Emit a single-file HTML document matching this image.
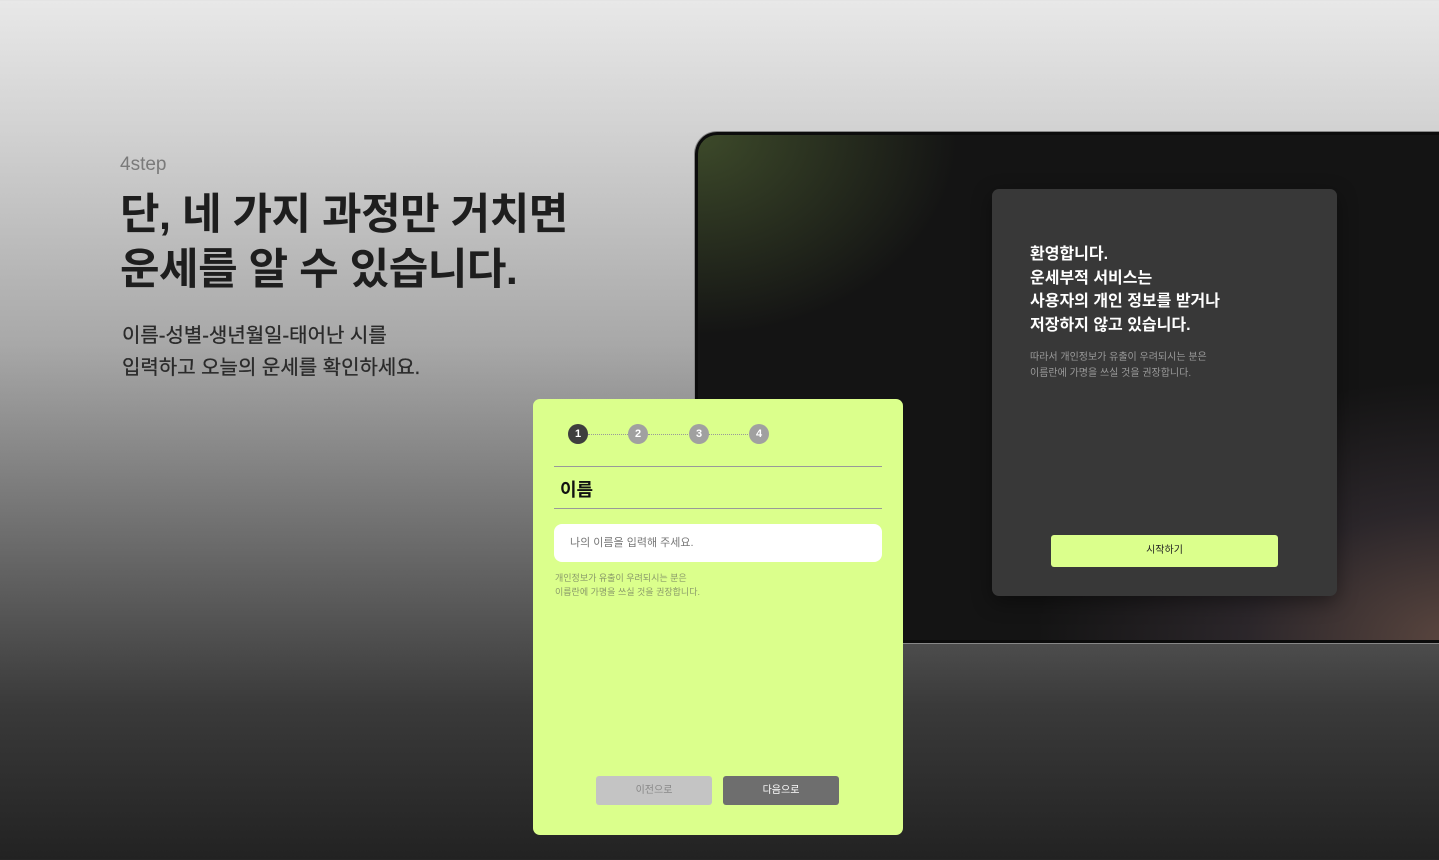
<!DOCTYPE html>
<html><head><meta charset="utf-8"><style>
*{margin:0;padding:0;box-sizing:border-box}
body{width:1439px;height:860px;overflow:hidden;position:relative;font-family:"Liberation Sans","Noto Sans CJK KR",sans-serif;background:linear-gradient(180deg,#e8e8e8 0%,#d2d2d2 15%,#a8a8a8 40%,#6e6e6e 62%,#3a3a3a 82%,#222 100%)}
.t{position:absolute;left:120px}
.screen{position:absolute;left:695px;top:132px;width:760px;height:511px;border:3px solid #0c0c0c;border-right:none;border-radius:22px 0 0 0;background:radial-gradient(ellipse 260px 200px at 0 0,#3d4a2a 0%,rgba(20,20,20,0) 100%),radial-gradient(ellipse 420px 260px at 100% 100%,#5a463f 0%,#2b262a 50%,rgba(20,20,20,0) 100%),#141414;box-shadow:0 0 0 1px #888}
.card{position:absolute;left:294px;top:54px;width:345px;height:407px;background:#383838;border-radius:7px;box-shadow:0 6px 20px rgba(0,0,0,.4)}
.g{position:absolute;left:533px;top:399px;width:370px;height:436px;background:#dbff8c;border-radius:7px}
.dot{position:absolute;top:25px;width:20px;height:20px;border-radius:50%;background:#a0a0a0;color:#fff;font-size:11px;font-weight:bold;text-align:center;line-height:20px}
.dl{position:absolute;top:35px;height:0;border-top:1px dotted #999;width:40px}
.btn{position:absolute;top:377px;width:116px;height:29px;border-radius:3px;font-size:10px;text-align:center;line-height:29px}
</style></head><body>
<div class="t" style="top:154px;font-size:19px;color:#7a7a7a">4step</div>
<div class="t" style="top:188px;font-size:43px;font-weight:bold;color:#1e1e1e;line-height:55px;letter-spacing:-0.5px">단, 네 가지 과정만 거치면<br>운세를 알 수 있습니다.</div>
<div class="t" style="top:320px;left:122px;font-size:20px;color:#2a2a2a;line-height:32px;-webkit-text-stroke:0.3px #2a2a2a">이름-성별-생년월일-태어난 시를<br>입력하고 오늘의 운세를 확인하세요.</div>
<div class="screen">
 <div class="card">
  <div style="position:absolute;left:38px;top:54px;color:#fff;font-size:16px;font-weight:bold;line-height:23.5px">환영합니다.<br>운세부적 서비스는<br>사용자의 개인 정보를 받거나<br>저장하지 않고 있습니다.</div>
  <div style="position:absolute;left:38px;top:161px;color:#9a9a9a;font-size:10px;line-height:16px">따라서 개인정보가 유출이 우려되시는 분은<br>이름란에 가명을 쓰실 것을 권장합니다.</div>
  <div style="position:absolute;left:59px;top:346px;width:227px;height:32px;background:#dbff8c;border-radius:3px;font-size:10px;text-align:center;line-height:32px;color:#222">시작하기</div>
 </div>
</div>
<div class="g">
 <div class="dl" style="left:55px"></div><div class="dl" style="left:115px"></div><div class="dl" style="left:175px"></div>
 <div class="dot" style="left:35px;background:#3e3e3e">1</div>
 <div class="dot" style="left:95px">2</div>
 <div class="dot" style="left:156px">3</div>
 <div class="dot" style="left:216px">4</div>
 <div style="position:absolute;left:21px;top:67px;width:328px;border-top:1px solid #999"></div>
 <div style="position:absolute;left:27px;top:77px;font-size:18px;font-weight:bold;color:#111">이름</div>
 <div style="position:absolute;left:21px;top:109px;width:328px;border-top:1px solid #999"></div>
 <div style="position:absolute;left:21px;top:125px;width:328px;height:38px;background:#fff;border-radius:8px;font-size:11px;color:#777;padding-left:16px;line-height:38px">나의 이름을 입력해 주세요.</div>
 <div style="position:absolute;left:22px;top:172px;font-size:9px;color:#8a9a6a;line-height:14px">개인정보가 유출이 우려되시는 분은<br>이름란에 가명을 쓰실 것을 권장합니다.</div>
 <div class="btn" style="left:63px;background:#c4c4c4;color:#888">이전으로</div>
 <div class="btn" style="left:190px;background:#6e6e6e;color:#fff">다음으로</div>
</div>
</body></html>
